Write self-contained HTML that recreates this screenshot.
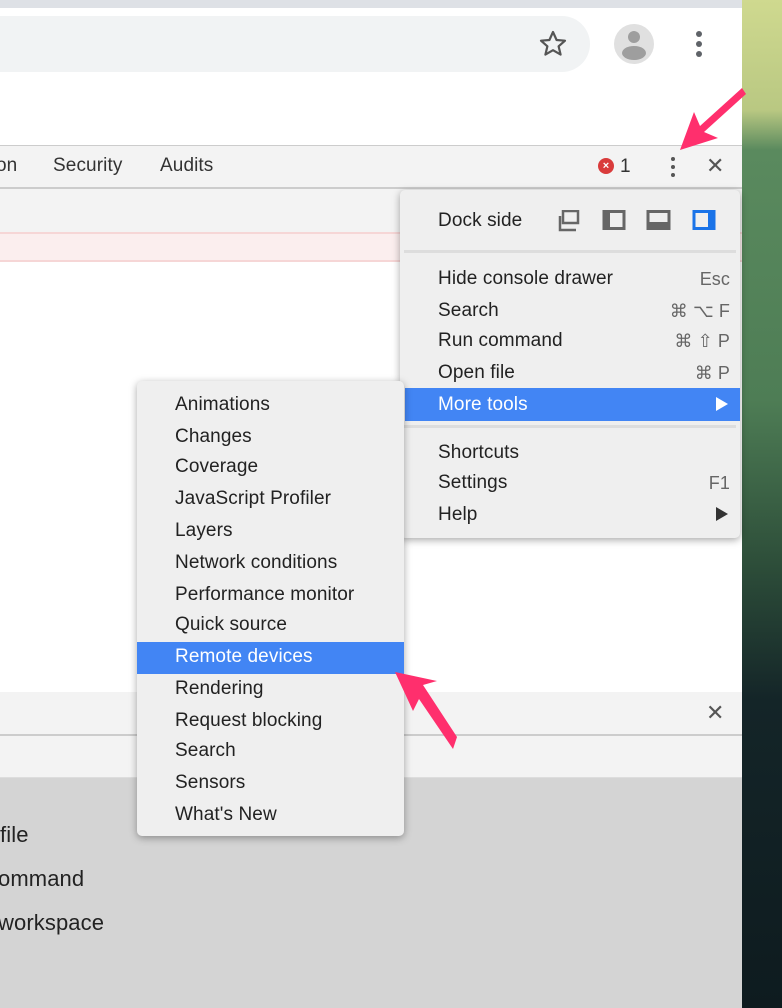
<!DOCTYPE html><html><head><style>
*{margin:0;padding:0;box-sizing:border-box}
body{width:782px;height:1008px;overflow:hidden;position:relative;background:#fff;font-family:"Liberation Sans",Arial,sans-serif;color:#222}
.a{position:absolute}
.t{position:absolute;font-size:19px;line-height:24px;white-space:nowrap;letter-spacing:0.1px}
.m{position:absolute;background:#efefef;border-radius:5px;box-shadow:0 2px 8px rgba(0,0,0,.35)}
.sc{position:absolute;right:0;color:#666;font-size:18px}
</style></head><body>
<div class="a" style="left:0;top:0;width:742px;height:8px;background:#dee1e6"></div>
<div class="a" style="left:-30px;top:16px;width:620px;height:56px;border-radius:28px;background:#f1f3f4"></div>
<svg class="a" style="left:538px;top:29px" width="30" height="30" viewBox="0 0 30 30"><path d="M15 3l3.6 8 8.4.7-6.4 5.6 2 8.3L15 21.2 7.4 25.6l2-8.3L3 11.7l8.4-.7z" fill="none" stroke="#555" stroke-width="2.2" stroke-linejoin="round"/></svg>
<div class="a" style="left:614px;top:24px;width:40px;height:40px;border-radius:50%;background:#e0e0e0;overflow:hidden"><div class="a" style="left:14px;top:7px;width:12px;height:12px;border-radius:50%;background:#9e9e9e"></div><div class="a" style="left:8px;top:22px;width:24px;height:14px;border-radius:50%;background:#9e9e9e"></div></div>
<div class="a" style="left:696px;top:31px;width:6px;height:6px;border-radius:50%;background:#5f6368;box-shadow:0 10px 0 #5f6368,0 20px 0 #5f6368"></div>
<div class="a" style="left:0;top:145px;width:742px;height:44px;background:#f3f3f3;border-top:1px solid #ccc;border-bottom:2px solid #ccc"></div>
<div class="t" style="left:-4px;top:154px;color:#333">on</div>
<div class="t" style="left:53px;top:154px;color:#333">Security</div>
<div class="t" style="left:160px;top:154px;color:#333">Audits</div>
<div class="a" style="left:598px;top:158px;width:16px;height:16px;border-radius:50%;background:#d93b3b;color:#fff;font-size:11px;line-height:16px;text-align:center;font-weight:bold">×</div>
<div class="t" style="left:620px;top:155px;color:#333">1</div>
<div class="a" style="left:671px;top:157px;width:4px;height:4px;border-radius:50%;background:#555;box-shadow:0 8px 0 #555,0 16px 0 #555"></div>
<div class="t" style="left:706px;top:154px;font-size:22px;color:#555">✕</div>
<div class="a" style="left:0;top:189px;width:742px;height:43px;background:#f3f3f3"></div>
<div class="a" style="left:0;top:232px;width:742px;height:30px;background:#fbeeee;border-top:2px solid #f6d6d6;border-bottom:2px solid #f6d6d6"></div>
<div class="a" style="left:0;top:692px;width:742px;height:86px;background:#f3f3f3;border-bottom:1px solid #ddd"></div>
<div class="a" style="left:0;top:734px;width:742px;height:2px;background:#ccc"></div>
<div class="t" style="left:706px;top:701px;font-size:22px;color:#555">✕</div>
<div class="a" style="left:0;top:778px;width:742px;height:230px;background:#d4d4d4"></div>
<div class="t" style="left:0;top:822px;font-size:22px;line-height:26px">file</div>
<div class="t" style="left:-2px;top:866px;font-size:22px;line-height:26px">ommand</div>
<div class="t" style="left:-2px;top:910px;font-size:22px;line-height:26px">workspace</div>
<div class="a" style="left:742px;top:0;width:40px;height:1008px;background:linear-gradient(#cfd98f 0,#b9c882 110px,#5a8a5e 150px,#4e7d55 400px,#2e4f3a 560px,#142528 700px,#0e1b1f 1008px)"></div>
<div class="m" style="left:400px;top:190px;width:340px;height:348px">
<div class="t" style="left:38px;top:19px">Dock side</div>
<svg class="a" style="left:158px;top:20px" width="170" height="22"><rect x="5" y="1" width="15" height="12" fill="none" stroke="#666" stroke-width="2.5"/><path d="M2 6v14h16" fill="none" stroke="#666" stroke-width="2.5"/><rect x="46" y="1.5" width="20" height="17" fill="none" stroke="#666" stroke-width="3"/><rect x="46" y="1.5" width="6" height="17" fill="#666"/><rect x="90" y="1.5" width="21" height="17" fill="none" stroke="#666" stroke-width="3"/><rect x="90" y="12" width="21" height="7" fill="#666"/><rect x="136" y="1.5" width="20" height="17" fill="none" stroke="#1a73e8" stroke-width="3"/><rect x="150" y="1.5" width="6" height="17" fill="#1a73e8"/></svg>
<div class="a" style="left:4px;top:60px;width:332px;height:3px;background:#ddd"></div>
<div class="t" style="left:38px;top:77px;width:292px">Hide console drawer<span class="sc">Esc</span></div>
<div class="t" style="left:38px;top:109px;width:292px">Search<span class="sc">⌘ ⌥ F</span></div>
<div class="t" style="left:38px;top:139px;width:292px">Run command<span class="sc">⌘ ⇧ P</span></div>
<div class="t" style="left:38px;top:171px;width:292px">Open file<span class="sc">⌘ P</span></div>
<div class="a" style="left:5px;top:198px;width:335px;height:33px;background:#4285f4"></div>
<div class="t" style="left:38px;top:203px;color:#fff">More tools</div>
<div class="a" style="left:316px;top:207px;border-left:12px solid #fff;border-top:7px solid transparent;border-bottom:7px solid transparent"></div>
<div class="a" style="left:4px;top:235px;width:332px;height:3px;background:#ddd"></div>
<div class="t" style="left:38px;top:251px">Shortcuts</div>
<div class="t" style="left:38px;top:281px;width:292px">Settings<span class="sc">F1</span></div>
<div class="t" style="left:38px;top:313px">Help</div>
<div class="a" style="left:316px;top:317px;border-left:12px solid #333;border-top:7px solid transparent;border-bottom:7px solid transparent"></div>
</div>
<div class="m" style="left:137px;top:381px;width:267px;height:455px">
<div class="a" style="left:0;top:261px;width:267px;height:32px;background:#4285f4"></div>
<div class="t" style="left:38px;top:12px">Animations</div>
<div class="t" style="left:38px;top:44px">Changes</div>
<div class="t" style="left:38px;top:74px">Coverage</div>
<div class="t" style="left:38px;top:106px">JavaScript Profiler</div>
<div class="t" style="left:38px;top:138px">Layers</div>
<div class="t" style="left:38px;top:170px">Network conditions</div>
<div class="t" style="left:38px;top:202px">Performance monitor</div>
<div class="t" style="left:38px;top:232px">Quick source</div>
<div class="t" style="left:38px;top:264px;color:#fff">Remote devices</div>
<div class="t" style="left:38px;top:296px">Rendering</div>
<div class="t" style="left:38px;top:328px">Request blocking</div>
<div class="t" style="left:38px;top:358px">Search</div>
<div class="t" style="left:38px;top:390px">Sensors</div>
<div class="t" style="left:38px;top:422px">What's New</div>
</div>
<svg class="a" style="left:0;top:0" width="782" height="1008"><path d="M742 88L700 126l-6-14-14 38 38-12-14-6 42-38z" fill="#ff2f6d"/><path d="M457 737L423 685l14-4-42-9 18 39 6-12 34 50z" fill="#ff2f6d"/></svg>
</body></html>
